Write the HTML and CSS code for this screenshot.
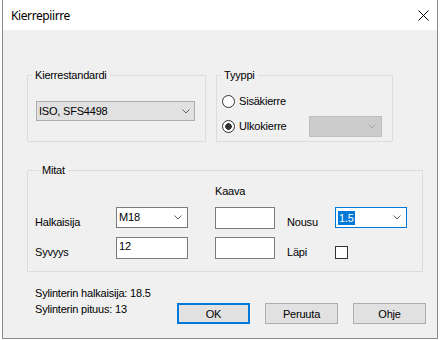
FILE: index.html
```html
<!DOCTYPE html>
<html>
	<head>
		<meta charset="utf-8">
		<title>Kierrepiirre</title>

		<link rel="stylesheet" href="styles.css">
	</head>
	<body>
		<div class="window">
			<div class="titlebar">
				<span class="title">Kierrepiirre</span>
				<svg class="close" width="11" height="11" viewBox="0 0 11 11">
					<path d="M0.5 0.5L10.5 10.5M10.5 0.5L0.5 10.5" stroke="#000" stroke-width="1" fill="none"/>
				</svg>
			</div>
			<div class="content">
				<div class="top-row">
					<fieldset class="group standard">
						<legend>Kierrestandardi</legend>
						<div class="combo combo-flat">
							<span>ISO, SFS4498</span>
							<svg class="arrow" width="8" height="5" viewBox="0 0 8 5"><polyline points="0.5,0.5 4,4 7.5,0.5" stroke="#606060" fill="none"/></svg>
						</div>
					</fieldset>
					<fieldset class="group type">
						<legend>Tyyppi</legend>
						<div class="radio-row first">
							<span class="radio"></span>
							<span>Sisäkierre</span>
						</div>
						<div class="radio-row">
							<span class="radio checked"></span>
							<span class="radio-text">Ulkokierre</span>
							<div class="combo combo-disabled">
								<span></span>
								<svg class="arrow" width="8" height="5" viewBox="0 0 8 5"><polyline points="0.5,0.5 4,4 7.5,0.5" stroke="#a6a6a6" fill="none"/></svg>
							</div>
						</div>
					</fieldset>
				</div>

				<fieldset class="group dims">
					<legend>Mitat</legend>
					<div class="grid">
						<span class="formula-title">Kaava</span>

						<span class="label row-start">Halkaisija</span>
						<div class="combo">
							<span>M18</span>
							<svg class="arrow" width="8" height="5" viewBox="0 0 8 5"><polyline points="0.5,0.5 4,4 7.5,0.5" stroke="#606060" fill="none"/></svg>
						</div>
						<div class="input formula"></div>
						<span class="label">Nousu</span>
						<div class="combo combo-focus">
							<span class="selected">1.5</span>
							<svg class="arrow" width="8" height="5" viewBox="0 0 8 5"><polyline points="0.5,0.5 4,4 7.5,0.5" stroke="#606060" fill="none"/></svg>
						</div>

						<span class="label row-start">Syvyys</span>
						<div class="input">12</div>
						<div class="input formula"></div>
						<span class="label">Läpi</span>
						<span class="checkbox"></span>
					</div>
				</fieldset>

				<div class="footer">
					<div class="info">
						<div>Sylinterin halkaisija: 18.5</div>
						<div>Sylinterin pituus: 13</div>
					</div>
					<div class="buttons">
						<button class="btn default">OK</button>
						<button class="btn">Peruuta</button>
						<button class="btn">Ohje</button>
					</div>
				</div>
			</div>
		</div>
	</body>
</html>
```

FILE: styles.css
```css
* {
	margin: 0;
	padding: 0;
	box-sizing: border-box;
}

body {
	background: #ffffff;
	font-family: "Liberation Sans", Arial, sans-serif;
	font-size: 11px;
	letter-spacing: -0.2px;
	color: #000000;
}

.window {
	margin-left: 2px;
	width: 436px;
	height: 339px;
	border: 1px solid #8a8a8a;
	border-top: none;
	background: #f0f0f0;
}

.titlebar {
	height: 30px;
	background: #ffffff;
	display: flex;
	align-items: center;
	justify-content: space-between;
	padding: 0 8px 0 8px;
}

.title {
	font-family: "Noto Sans", sans-serif;
	font-size: 12px;
	letter-spacing: -0.4px;
}

.close {
	display: block;
}

.content {
	padding: 39px 0 0 24px;
}

.top-row {
	display: flex;
	gap: 10px;
}

.group {
	border: 1px solid #dcdcdc;
}

.group legend {
	margin-left: 4px;
	padding: 0 3px;
	line-height: 13px;
}

.standard {
	width: 179px;
}

.type {
	width: 177px;
	padding-bottom: 4px;
}

/* combo boxes */
.combo {
	display: flex;
	align-items: center;
	justify-content: space-between;
	height: 21px;
	border: 1px solid #7a7a7a;
	background: #ffffff;
	padding: 0 5px 0 2px;
	line-height: 13px;
}

.combo .arrow {
	display: block;
}

.combo-flat {
	width: 159px;
	height: 20px;
	margin: 19px 0 0 8px;
	background: #e1e1e1;
	border-color: #adadad;
	padding-right: 4px;
}

.combo-disabled {
	width: 73px;
	margin: 0 10px 0 auto;
	background: #cccccc;
	border-color: #bfbfbf;
}

.combo-focus {
	border-color: #0078d7;
}

.combo .selected {
	background: #0078d7;
	color: #ffffff;
	padding: 0 1px;
	line-height: 14px;
}

/* radios */
.radio-row {
	display: flex;
	align-items: center;
	height: 21px;
	margin-top: 8px;
	padding-left: 5px;
	line-height: 13px;
}

.radio-row.first {
	height: 13px;
	margin-top: 13px;
}

.radio {
	width: 13px;
	height: 13px;
	border: 1px solid #333333;
	border-radius: 50%;
	background: #ffffff;
	margin-right: 4px;
}

.radio.checked {
	background: radial-gradient(circle, #333333 3px, #ffffff 3.6px);
}

/* dimensions */
.dims {
	width: 396px;
	margin-top: 22px;
	padding: 8px 0 12px 7px;
}

.grid {
	display: grid;
	grid-template-columns: 81px 99px 72px 48px 72px;
	grid-template-rows: 14px 22px 22px;
	row-gap: 8px;
	line-height: 13px;
}

.formula-title {
	grid-column: 3;
}

.label {
	align-self: end;
}

.label.row-start {
	grid-column: 1;
}

.grid .combo {
	width: 72px;
}

.input {
	height: 22px;
	width: 72px;
	background: #ffffff;
	border: 1px solid #7a7a7a;
	padding: 2px 2px 0 2px;
}

.input.formula {
	width: 60px;
}

.checkbox {
	align-self: end;
	width: 13px;
	height: 13px;
	border: 1px solid #333333;
	background: #ffffff;
}

/* footer */
.footer {
	display: flex;
	margin-top: 13px;
	padding-left: 8px;
}

.info {
	width: 142px;
	line-height: 16px;
}

.buttons {
	display: flex;
	gap: 15px;
	margin-top: 18px;
}

.btn {
	width: 73px;
	height: 21px;
	background: #e1e1e1;
	border: 1px solid #adadad;
	font-family: "Liberation Sans", Arial, sans-serif;
	font-size: 11px;
	letter-spacing: -0.2px;
	color: #000000;
}

.btn.default {
	border: 2px solid #0078d7;
}
```
